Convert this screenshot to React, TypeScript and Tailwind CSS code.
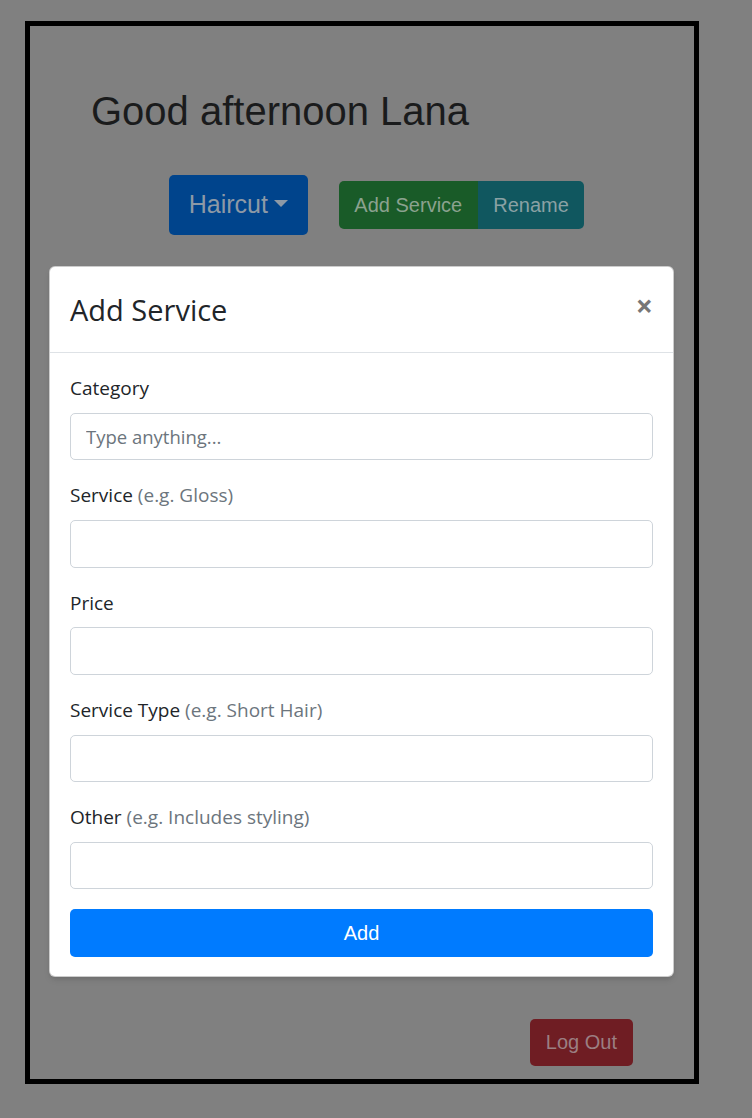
import React from 'react';

const modalFont = { fontFamily: '"Open Sans", "Noto Sans", sans-serif' };

const Field: React.FC<{ label: string; hint?: string; placeholder?: string }> = ({ label, hint, placeholder }) => (
  <div className="mb-[20px]">
    <label className="block mb-[9.8px] text-[19px] leading-[30px] text-[#212529]">
      {label}
      {hint && <span className="text-[#6c757d]"> {hint}</span>}
    </label>
    <input
      type="text"
      placeholder={placeholder}
      className="block w-full h-[47.5px] px-[15px] text-[18.5px] text-[#495057] bg-white border border-[#ced4da] rounded-[5px] placeholder:text-[#6c757d] focus:outline-none"
    />
  </div>
);

export default function App() {
  return (
    <div className="relative min-h-[1118px] w-[752px] bg-[#808080] pt-[21px] pl-[25px]" style={{ fontFamily: '"Liberation Sans", Arial, sans-serif' }}>
      {/* page under the backdrop */}
      <div className="w-[674px] h-[1063px] border-[5px] border-black flex flex-col">
        <h2 className="mt-[61px] ml-[61px] text-[40px] leading-[48px] text-[#1a1b1c]">Good afternoon Lana</h2>
        <div className="mt-[40px] pl-[29px] flex items-center justify-center gap-[31px]">
          <button className="h-[60px] px-[20px] flex items-center rounded-[5px] bg-[#00448c] text-[25px] text-[#8d99a6]">
            Haircut
            <span className="inline-block ml-[6px] w-0 h-0 border-l-[7.5px] border-r-[7.5px] border-t-[7.5px] border-l-transparent border-r-transparent border-t-[#8d99a6] mb-[4px]" />
          </button>
          <div className="flex h-[47.5px] rounded-[5px] overflow-hidden text-[20px]">
            <button className="px-[15.5px] bg-[#195b28] text-[#8ba28f]">Add Service</button>
            <button className="px-[15.5px] bg-[#10575f] text-[#8aa1a4]">Rename</button>
          </div>
        </div>
        <div className="mt-auto mb-[13px] mr-[61px] flex justify-end">
          <button className="h-[47.5px] px-[16px] rounded-[5px] bg-[#6f1d23] text-[20px] text-[#9b7f82]">Log Out</button>
        </div>
      </div>

      {/* modal */}
      <div
        className="absolute left-[49px] top-[266px] w-[625px] bg-white rounded-[6px] border border-black/20 shadow-md"
        style={modalFont}
      >
        <div className="flex items-center justify-between px-[20px] py-[20px] border-b border-[#dee2e6]">
          <h4 className="text-[29px] leading-[45px] text-[#212529]">Add Service</h4>
          <button className="text-[30px] leading-none font-bold text-[#777] -mt-[8px]">×</button>
        </div>
        <div className="px-[20px] pt-[20px] pb-[19.5px]">
          <Field label="Category" placeholder="Type anything..." />
          <Field label="Service" hint="(e.g. Gloss)" />
          <Field label="Price" />
          <Field label="Service Type" hint="(e.g. Short Hair)" />
          <Field label="Other" hint="(e.g. Includes styling)" />
          <button className="block w-full h-[47.5px] rounded-[5px] bg-[#007bff] text-white text-[20px]" style={{ fontFamily: '"Liberation Sans", Arial, sans-serif' }}>
            Add
          </button>
        </div>
      </div>
    </div>
  );
}
